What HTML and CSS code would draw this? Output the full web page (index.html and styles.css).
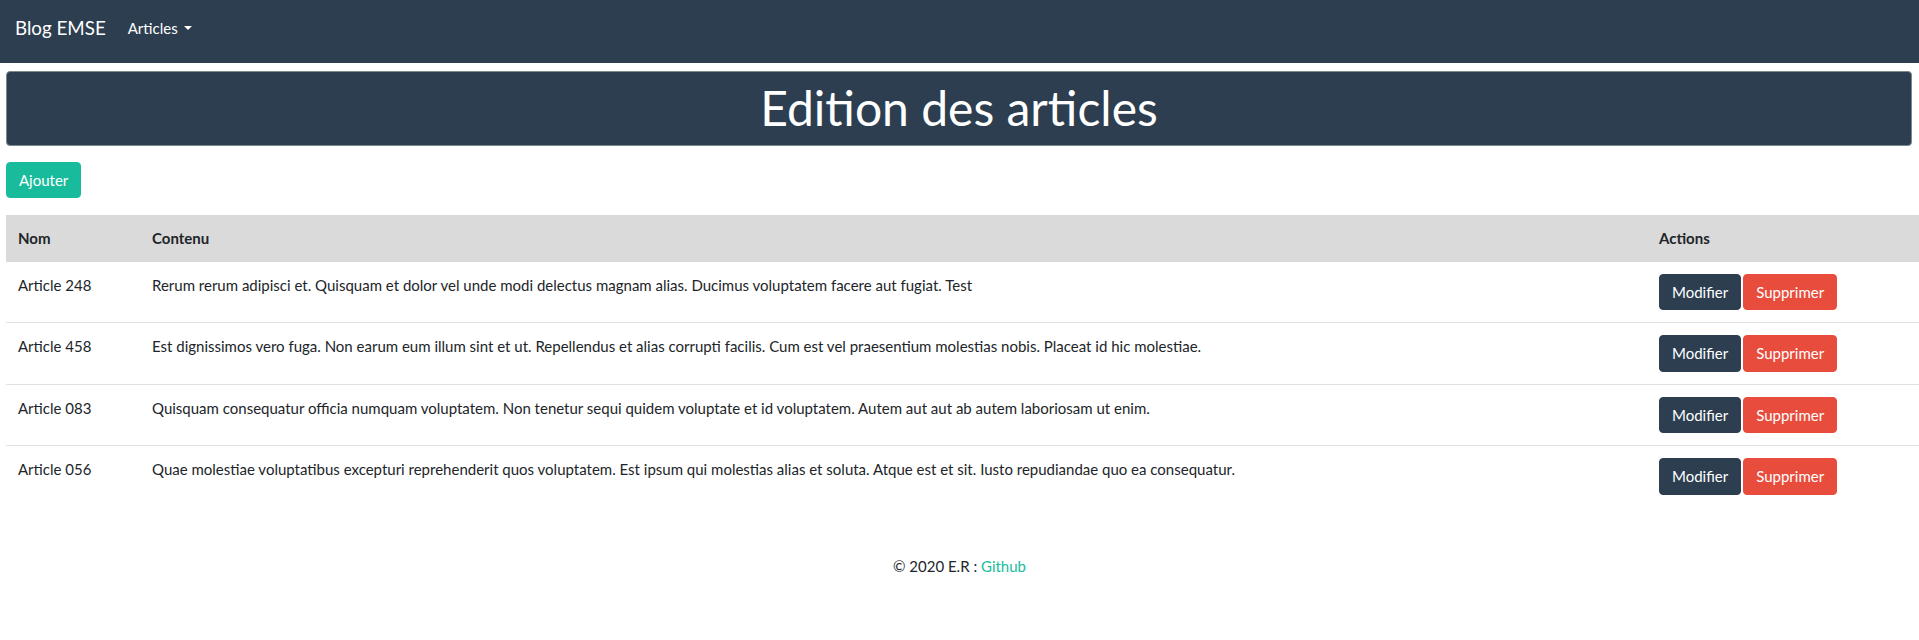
FILE: index.html
```html
<!DOCTYPE html>
<html lang="fr">
<head>
<meta charset="utf-8">
<title>Blog EMSE</title>
<link rel="stylesheet" href="styles.css">
</head>
<body>
<nav class="navbar">
  <a class="brand" href="#">Blog EMSE</a>
  <a class="nav-link" href="#">Articles<span class="caret"></span></a>
</nav>
<main class="page">
  <div class="page-header">
    <h1>Edition des articles</h1>
  </div>
  <div class="toolbar">
    <a class="btn btn-success" href="#">Ajouter</a>
  </div>
  <table class="table">
    <colgroup>
      <col class="col-name">
      <col class="col-content">
      <col class="col-actions">
    </colgroup>
    <thead>
      <tr><th>Nom</th><th>Contenu</th><th>Actions</th></tr>
    </thead>
    <tbody>
      <tr>
        <td>Article 248</td>
        <td>Rerum rerum adipisci et. Quisquam et dolor vel unde modi delectus magnam alias. Ducimus voluptatem facere aut fugiat. Test</td>
        <td><div class="actions"><a class="btn btn-primary" href="#">Modifier</a><a class="btn btn-danger" href="#">Supprimer</a></div></td>
      </tr>
      <tr>
        <td>Article 458</td>
        <td>Est dignissimos vero fuga. Non earum eum illum sint et ut. Repellendus et alias corrupti facilis. Cum est vel praesentium molestias nobis. Placeat id hic molestiae.</td>
        <td><div class="actions"><a class="btn btn-primary" href="#">Modifier</a><a class="btn btn-danger" href="#">Supprimer</a></div></td>
      </tr>
      <tr>
        <td>Article 083</td>
        <td>Quisquam consequatur officia numquam voluptatem. Non tenetur sequi quidem voluptate et id voluptatem. Autem aut aut ab autem laboriosam ut enim.</td>
        <td><div class="actions"><a class="btn btn-primary" href="#">Modifier</a><a class="btn btn-danger" href="#">Supprimer</a></div></td>
      </tr>
      <tr>
        <td>Article 056</td>
        <td>Quae molestiae voluptatibus excepturi reprehenderit quos voluptatem. Est ipsum qui molestias alias et soluta. Atque est et sit. Iusto repudiandae quo ea consequatur.</td>
        <td><div class="actions"><a class="btn btn-primary" href="#">Modifier</a><a class="btn btn-danger" href="#">Supprimer</a></div></td>
      </tr>
    </tbody>
  </table>
</main>
<footer class="footer">© 2020 E.R : <a href="#">Github</a></footer>
</body>
</html>
```
FILE: styles.css
```css
* { box-sizing: border-box; }

html, body { overflow-x: hidden; }

body {
  margin: 0;
  font-family: Lato, "Noto Sans", sans-serif;
  font-size: 15px;
  line-height: 1.5;
  color: #212529;
  background: #fff;
}

a { text-decoration: none; }

.navbar {
  display: flex;
  align-items: center;
  background: #2c3e50;
  padding: 14px 15px 21px;
}

.brand {
  color: #fff;
  font-size: 18.75px;
  line-height: 28px;
  margin-right: 14px;
}

.nav-link {
  color: #fff;
  padding: 0 8px;
  line-height: 22.5px;
}

.caret {
  display: inline-block;
  margin-left: 6px;
  vertical-align: 3.8px;
  border-top: 4.5px solid #fff;
  border-left: 4.5px solid transparent;
  border-right: 4.5px solid transparent;
}

.page {
  padding: 8px 7px 0 6px;
}

.page-header {
  background: #2c3e50;
  border: 1px solid #7b8a8b;
  border-radius: 4px;
  text-align: center;
  color: #fff;
  padding-top: 7px;
}

.page-header h1 {
  margin: 0 0 8px;
  font-size: 48px;
  font-weight: 400;
  line-height: 1.2;
}

.toolbar {
  padding: 16px 0 17px;
}

.btn {
  display: inline-block;
  font-size: 15px;
  line-height: 22.5px;
  padding: 6px 12px;
  border: 1px solid transparent;
  border-radius: 4px;
  color: #fff;
  white-space: nowrap;
}

.btn-success { background: #18bc9c; border-color: #18bc9c; }
.btn-primary { background: #2c3e50; border-color: #2c3e50; }
.btn-danger { background: #e74c3c; border-color: #e74c3c; }

.table {
  width: calc(100% + 7px);
  margin-right: -7px;
  border-collapse: collapse;
  table-layout: fixed;
  margin-bottom: 16px;
}

.col-name { width: 134px; }
.col-actions { width: 272px; }

.table th,
.table td {
  padding: 12px;
  text-align: left;
  vertical-align: top;
}

.table thead th {
  background: #dadada;
  font-weight: 700;
}

.table tbody tr + tr td {
  border-top: 1px solid #dee2e6;
}

.actions {
  display: flex;
  gap: 2px;
}

.footer {
  text-align: center;
  padding-top: 32px;
}

.footer a { color: #18bc9c; }
```
